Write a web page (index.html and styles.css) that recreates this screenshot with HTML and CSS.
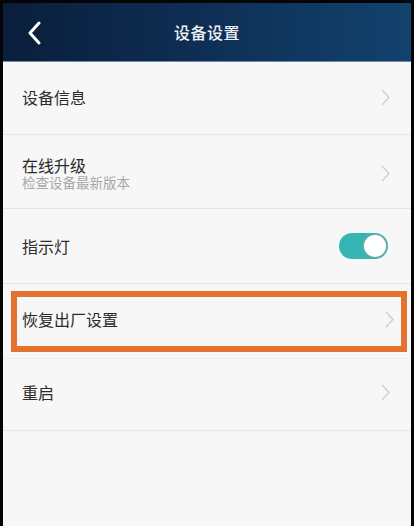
FILE: index.html
```html
<!DOCTYPE html>
<html lang="zh">
<head>
<meta charset="utf-8">
<title>设备设置</title>
<link rel="stylesheet" href="styles.css">
</head>
<body>
<div class="frame">
  <header class="topbar">
    <span class="back">
      <svg width="14" height="24" viewBox="0 0 14 24"><path d="M12 2 L3 12 L12 22" fill="none" stroke="#fff" stroke-width="3" stroke-linecap="round" stroke-linejoin="round"/></svg>
    </span>
    <h1 class="title">设备设置</h1>
  </header>
  <main class="list">
    <div class="row r1">
      <div class="label">设备信息</div>
      <svg class="chev" width="9" height="17" viewBox="0 0 9 17"><path d="M1 1 L8 8.5 L1 16" fill="none" stroke="#cfcfcf" stroke-width="1.4"/></svg>
    </div>
    <div class="row r2">
      <div class="labels">
        <div class="label tight">在线升级</div>
        <div class="sub">检查设备最新版本</div>
      </div>
      <svg class="chev" width="9" height="17" viewBox="0 0 9 17"><path d="M1 1 L8 8.5 L1 16" fill="none" stroke="#cfcfcf" stroke-width="1.4"/></svg>
    </div>
    <div class="row r3">
      <div class="label">指示灯</div>
      <div class="toggle"><span class="knob"></span></div>
    </div>
    <div class="hl-wrap">
      <div class="row hl">
        <div class="label">恢复出厂设置</div>
        <svg class="chev" width="9" height="17" viewBox="0 0 9 17"><path d="M1 1 L8 8.5 L1 16" fill="none" stroke="#cfcfcf" stroke-width="1.4"/></svg>
      </div>
    </div>
    <div class="row r5">
      <div class="label">重启</div>
      <svg class="chev" width="9" height="17" viewBox="0 0 9 17"><path d="M1 1 L8 8.5 L1 16" fill="none" stroke="#cfcfcf" stroke-width="1.4"/></svg>
    </div>
  </main>
</div>
</body>
</html>
```
FILE: styles.css
```css
html, body {
  margin: 0;
  padding: 0;
  background: #000;
}
body {
  font-family: "Noto Sans CJK SC", "Noto Sans", sans-serif;
  width: 414px;
  height: 526px;
  overflow: hidden;
}
.frame {
  box-sizing: border-box;
  width: 414px;
  height: 526px;
  border-top: 3px solid #050505;
  border-left: 3px solid #050505;
  border-right: 3px solid #050505;
  background: #f7f7f7;
  display: flex;
  flex-direction: column;
}
.topbar {
  height: 58px;
  flex: none;
  display: flex;
  align-items: center;
  justify-content: center;
  position: relative;
  background: linear-gradient(90deg, #0a1e3c 0%, #0e2f55 50%, #12426e 100%);
  border-bottom: 1px solid #6f8aa6;
}
.back {
  position: absolute;
  left: 24px;
  top: 18px;
  display: flex;
}
.title {
  margin: 0;
  font-size: 16px;
  font-weight: 500;
  color: #eef2f7;
  letter-spacing: 0.5px;
}
.list {
  display: flex;
  flex-direction: column;
}
.row {
  display: flex;
  align-items: center;
  justify-content: space-between;
  padding: 0 19px 0 19px;
  border-bottom: 1px solid #e6e6e6;
  box-sizing: border-box;
}
.r1 { height: 73px; padding-bottom: 2px; }
.r2 { height: 74px; padding-top: 3px; }
.r3 { height: 75px; }
.r5 { height: 72px; padding-bottom: 5px; }
.label {
  font-size: 16px;
  color: #2b2b2b;
  line-height: 20px;
}
.label.tight {
  line-height: 18px;
}
.labels {
  display: flex;
  flex-direction: column;
}
.sub {
  font-size: 13.5px;
  color: #a8a8a8;
  line-height: 16px;
}
.chev {
  display: block;
  margin-right: 2px;
}
.toggle {
  width: 49px;
  height: 26px;
  border-radius: 13px;
  background: #35b5b4;
  display: flex;
  align-items: center;
  justify-content: flex-end;
  padding: 0 2px;
  box-sizing: border-box;
  margin-right: 4px;
}
.knob {
  width: 22px;
  height: 22px;
  border-radius: 50%;
  background: #fff;
  box-shadow: 0 0 0 1px #7fa9a9;
}
.hl-wrap {
  height: 75px;
  padding: 7px 4px 6px 8px;
  box-sizing: border-box;
  display: flex;
  border-bottom: 1px solid #ececec;
}
.hl {
  flex: 1;
  border: 6px solid #e3712f;
  padding: 0 5px 5px 5px;
}
```
